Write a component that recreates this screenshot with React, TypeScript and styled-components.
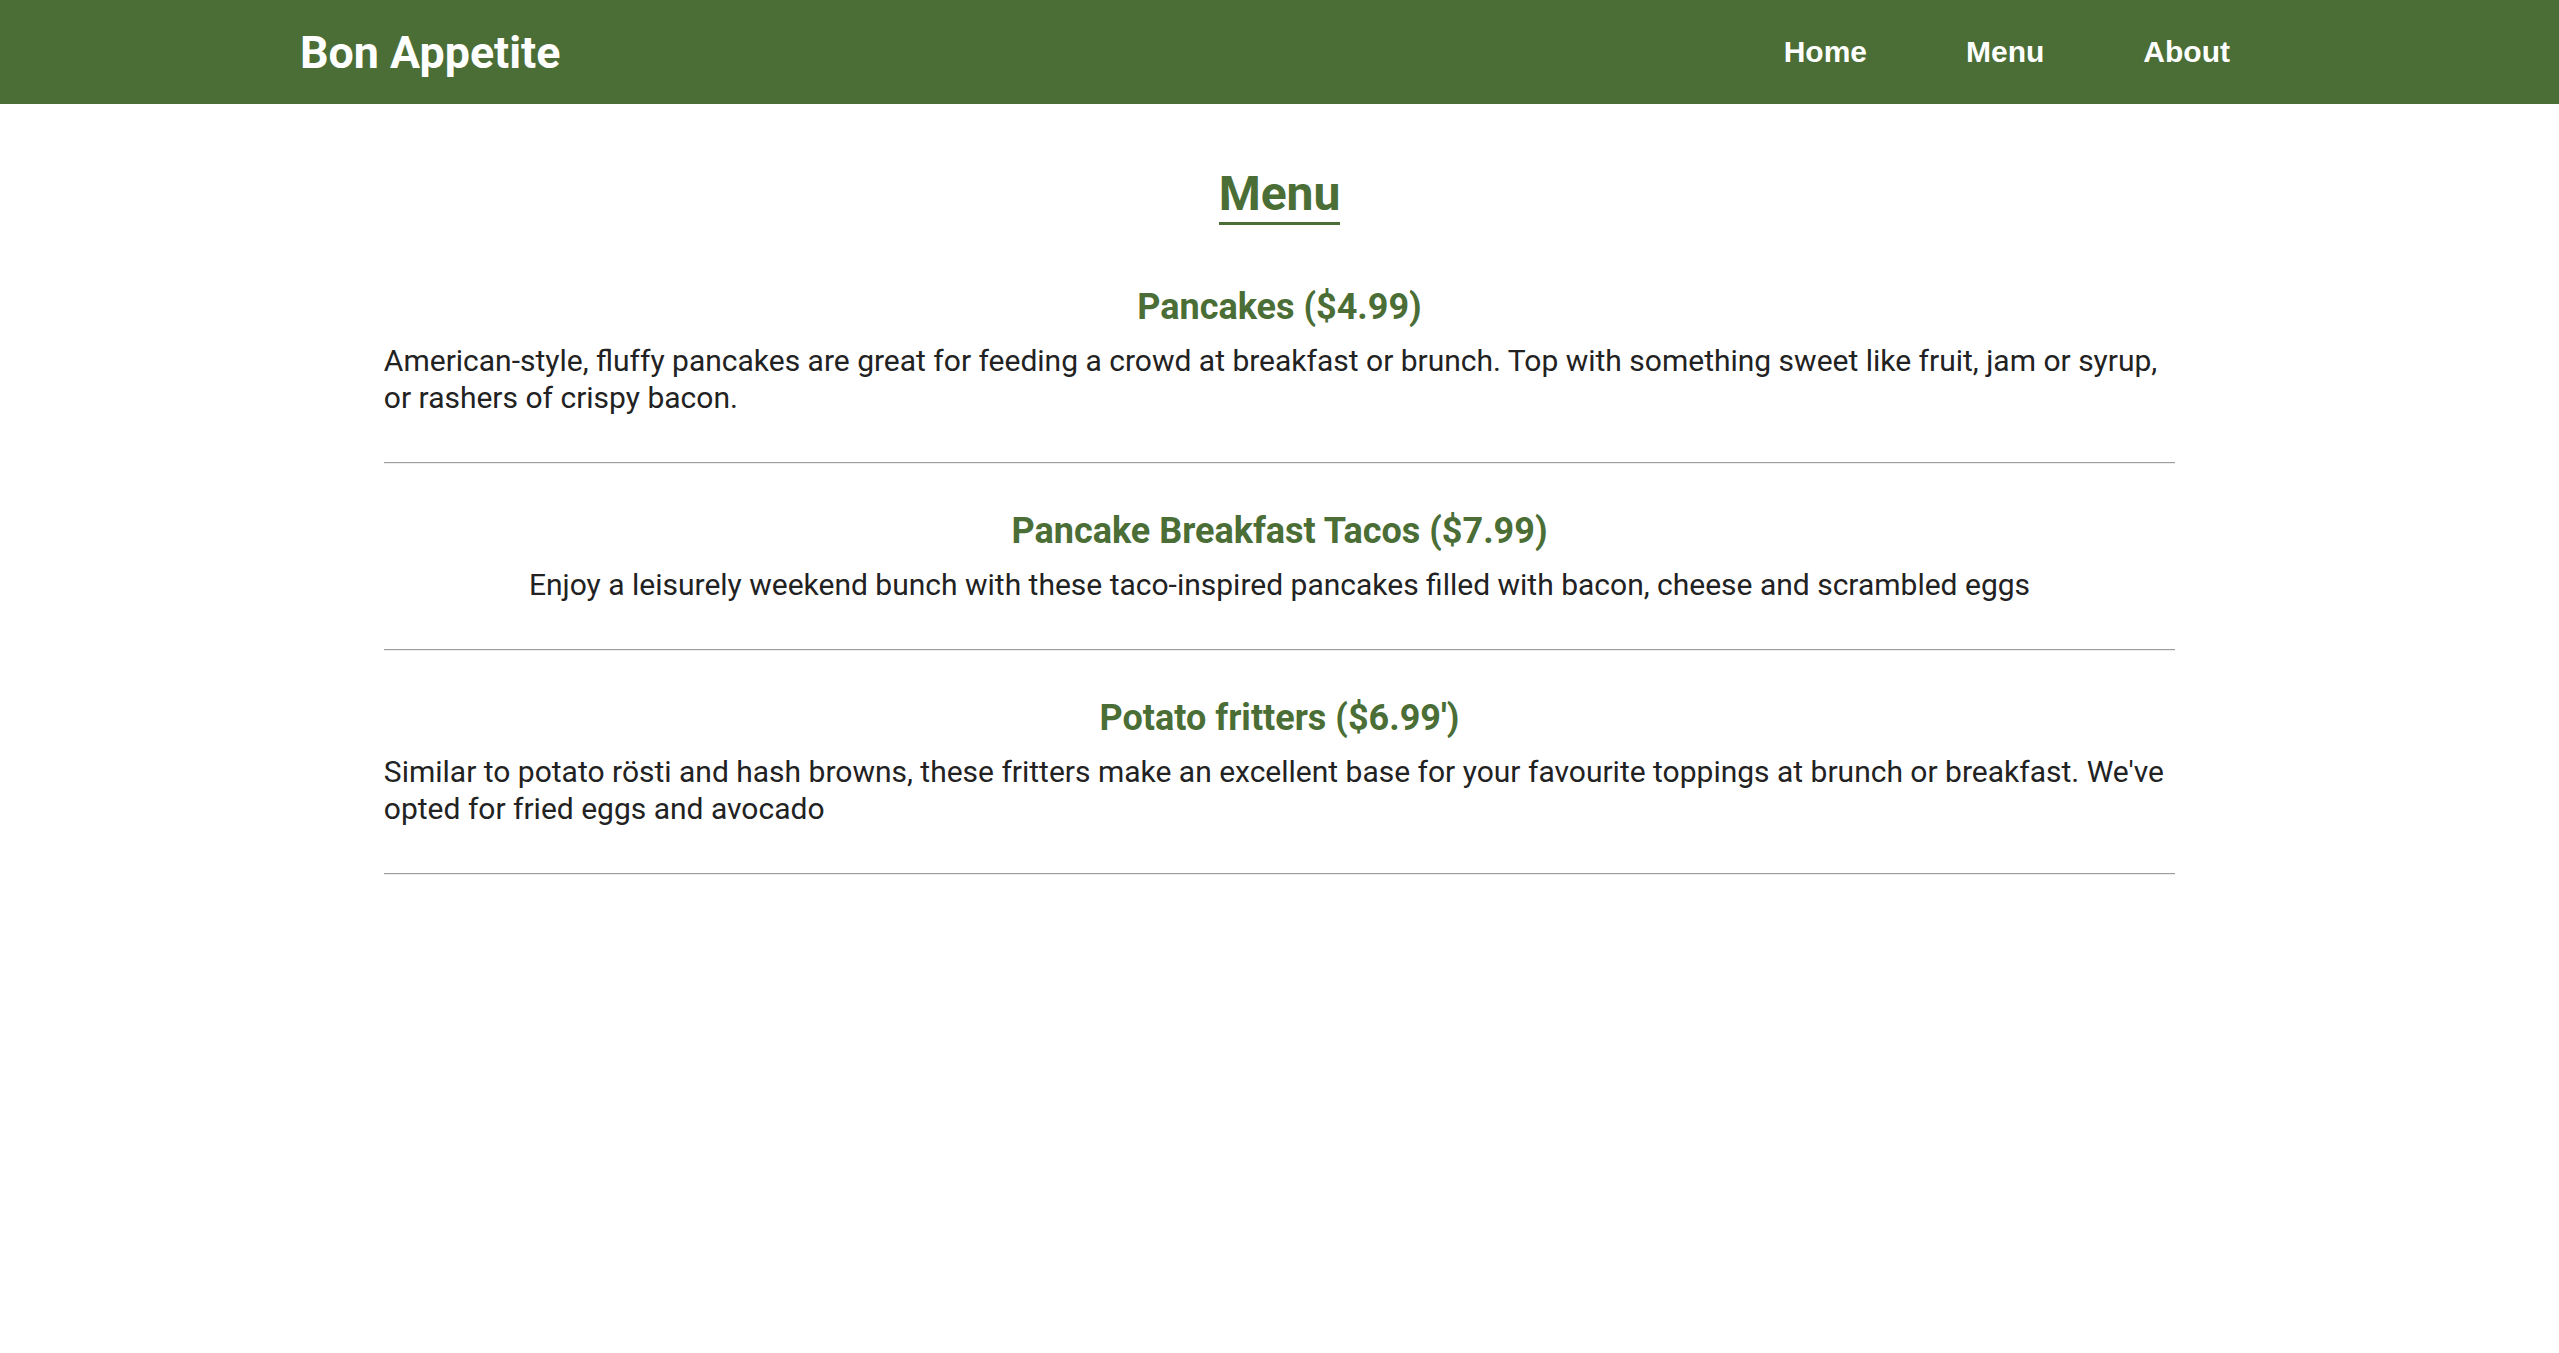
import React from "react";
import styled, { createGlobalStyle } from "styled-components";

const GREEN = "#4a6e35";

const Global = createGlobalStyle`
  html, body { margin: 0; padding: 0; background: #ffffff; }
  body { font-family: Roboto, "Noto Sans", sans-serif; color: #222222; }
  * { box-sizing: border-box; }
`;

const Header = styled.header`
  height: 104px;
  background: ${GREEN};
  display: flex;
  align-items: center;
  justify-content: space-between;
  padding: 0 329px 0 300px;
`;

const Brand = styled.div`
  font-family: Roboto, sans-serif;
  font-weight: 700;
  font-size: 44.8px;
  color: #ffffff;
`;

const Nav = styled.nav`
  display: flex;
  align-items: center;
  gap: 99px;
`;

const NavButton = styled.button`
  background: none;
  border: none;
  padding: 0;
  margin: 0;
  font-family: "Liberation Sans", Arial, sans-serif;
  font-weight: 700;
  font-size: 30px;
  color: #ffffff;
  cursor: pointer;
`;

const Main = styled.main`
  width: 70%;
  margin: 0 auto;
  display: flex;
  flex-direction: column;
  align-items: center;
  padding-top: 61px;
`;

const Title = styled.h2`
  display: inline-block;
  margin: 0 0 14.6px;
  font-size: 48px;
  font-weight: 700;
  line-height: normal;
  color: ${GREEN};
  border-bottom: 3px solid ${GREEN};
`;

const Item = styled.section`
  width: 100%;
  padding: 46.4px 0 45px;
  display: flex;
  flex-direction: column;
  align-items: center;
`;

const ItemName = styled.h3`
  margin: 0;
  font-size: 36px;
  font-weight: 700;
  line-height: normal;
  color: ${GREEN};
  text-align: center;
`;

const Description = styled.p`
  width: 100%;
  margin: 14px 0 0;
  display: flex;
  justify-content: center;
  font-size: 30px;
  line-height: 37.4px;
  color: #222222;
`;

const Rule = styled.hr`
  width: 100%;
  height: 0;
  margin: 0;
  border: none;
  border-top: 1px solid #9e9e9e;
  border-bottom: 1px solid #ececec;
`;

const items = [
  {
    name: "Pancakes ($4.99)",
    text: "American-style, fluffy pancakes are great for feeding a crowd at breakfast or brunch. Top with something sweet like fruit, jam or syrup, or rashers of crispy bacon.",
  },
  {
    name: "Pancake Breakfast Tacos ($7.99)",
    text: "Enjoy a leisurely weekend bunch with these taco-inspired pancakes filled with bacon, cheese and scrambled eggs",
  },
  {
    name: "Potato fritters ($6.99')",
    text: "Similar to potato rösti and hash browns, these fritters make an excellent base for your favourite toppings at brunch or breakfast. We've opted for fried eggs and avocado",
  },
];

export default function App() {
  return (
    <>
      <Global />
      <Header>
        <Brand>Bon Appetite</Brand>
        <Nav>
          <NavButton>Home</NavButton>
          <NavButton>Menu</NavButton>
          <NavButton>About</NavButton>
        </Nav>
      </Header>
      <Main>
        <Title>Menu</Title>
        {items.map((it) => (
          <React.Fragment key={it.name}>
            <Item>
              <ItemName>{it.name}</ItemName>
              <Description>
                <span>{it.text}</span>
              </Description>
            </Item>
            <Rule />
          </React.Fragment>
        ))}
      </Main>
    </>
  );
}
